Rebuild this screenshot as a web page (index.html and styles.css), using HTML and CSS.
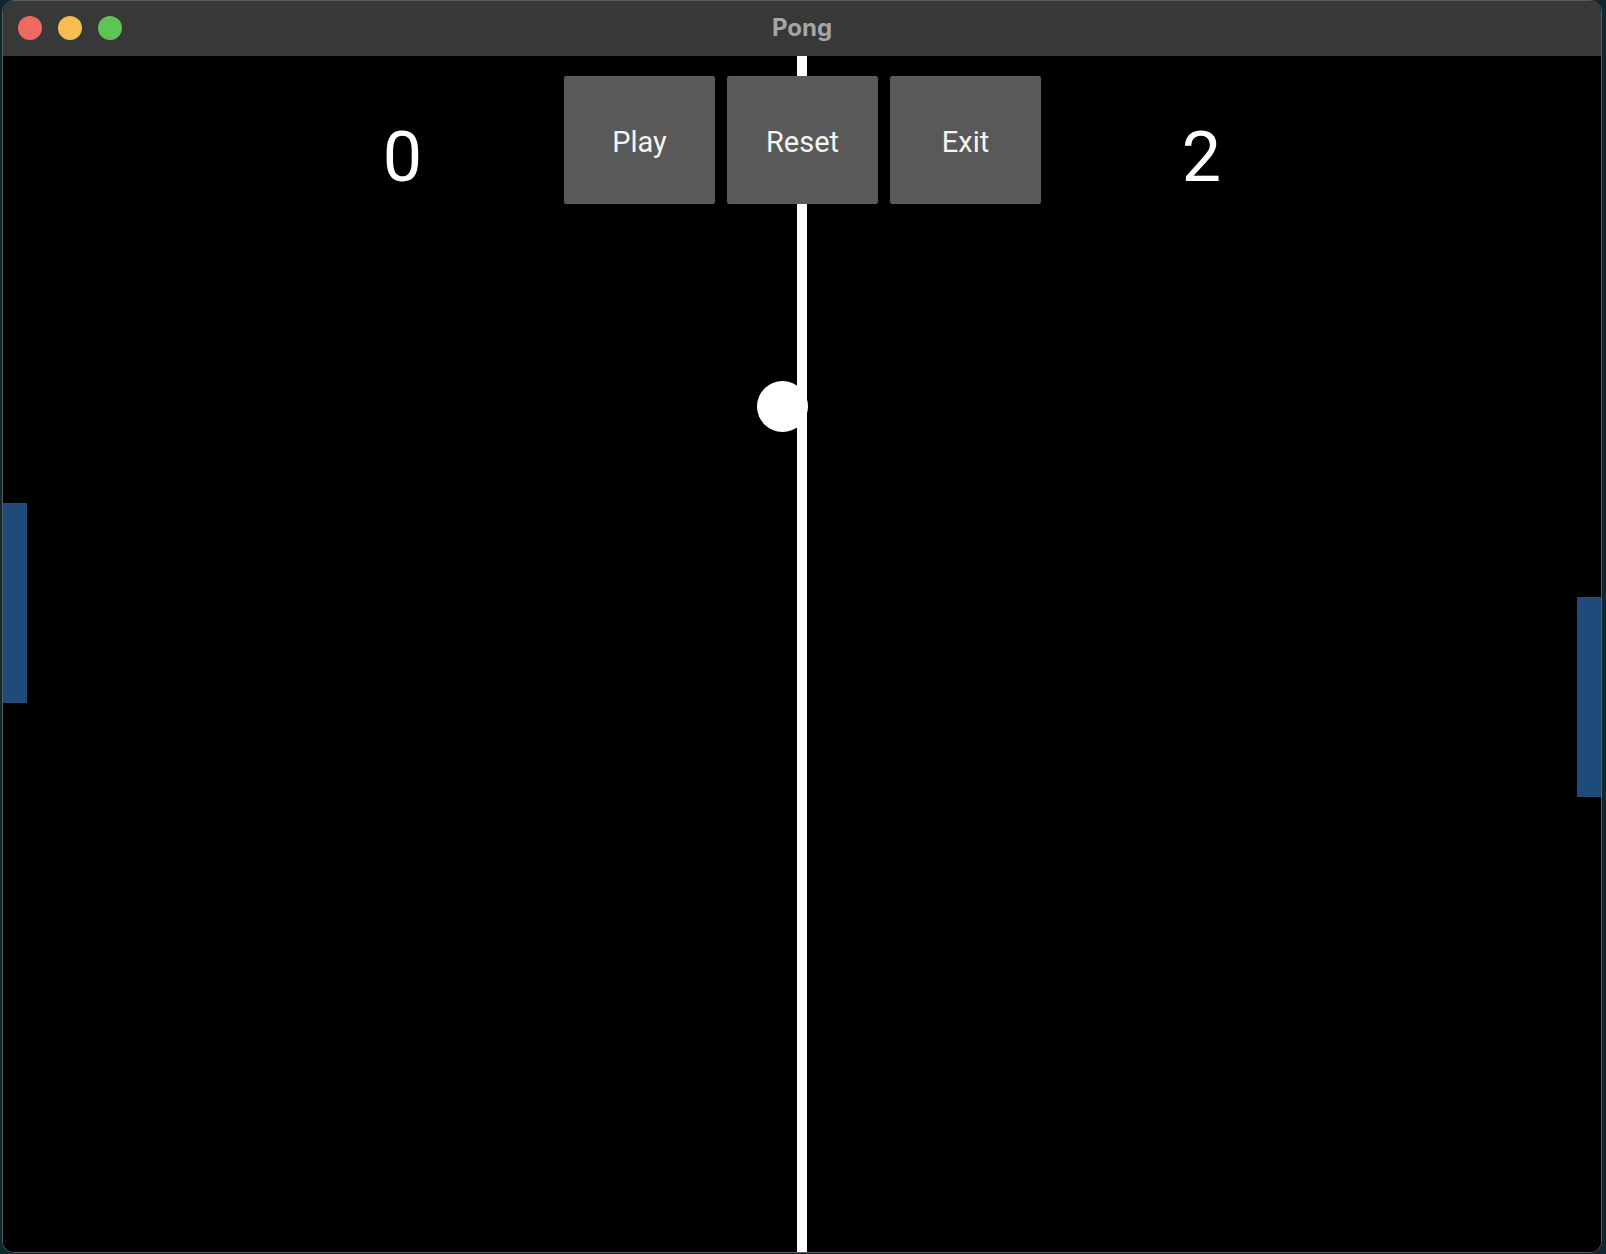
FILE: index.html
```html
<!DOCTYPE html>
<html lang="en">
<head>
<meta charset="utf-8">
<title>Pong</title>
<link rel="stylesheet" href="styles.css">
</head>
<body>
<div class="desktop">
  <div class="window">
    <div class="titlebar">
      <div class="lights">
        <span class="light red"></span>
        <span class="light yellow"></span>
        <span class="light green"></span>
      </div>
      <div class="title">Pong</div>
    </div>
    <div class="court">
      <div class="net"></div>
      <div class="scores">
        <div class="score">0</div>
        <div class="score">2</div>
      </div>
      <div class="controls">
        <button class="btn">Play</button>
        <button class="btn">Reset</button>
        <button class="btn">Exit</button>
      </div>
      <div class="ball"></div>
      <div class="paddle paddle-left"></div>
      <div class="paddle paddle-right"></div>
    </div>
  </div>
</div>
</body>
</html>
```
FILE: styles.css
```css
* { box-sizing: border-box; }
html, body {
  margin: 0;
  padding: 0;
  width: 1606px;
  height: 1254px;
  overflow: hidden;
  background: #0e2730;
  font-family: Roboto, "Liberation Sans", sans-serif;
}
.desktop {
  padding-left: 2px;
  height: 1254px;
}
.window {
  width: 1600px;
  height: 1253px;
  border: 1px solid #5c5c5c;
  border-radius: 12px;
  overflow: hidden;
  display: flex;
  flex-direction: column;
  background: #000;
}
.titlebar {
  height: 55px;
  flex: none;
  background: #383838;
  display: flex;
  align-items: center;
  position: relative;
}
.lights {
  display: flex;
  gap: 16px;
  padding-left: 15px;
  padding-bottom: 1px;
}
.light {
  width: 24px;
  height: 24px;
  border-radius: 50%;
  display: block;
}
.red { background: #ee6a5f; }
.yellow { background: #f5be4f; }
.green { background: #5ec454; }
.title {
  position: absolute;
  left: 0;
  right: 0;
  top: 0;
  bottom: 0;
  display: flex;
  align-items: center;
  justify-content: center;
  font-family: Inter, "Liberation Sans", sans-serif;
  font-weight: 700;
  font-size: 24px;
  color: #a6a6a6;
  padding-bottom: 3px;
}
.court {
  flex: 1;
  position: relative;
  background: #000;
}
.net {
  position: absolute;
  left: calc(50% - 5px);
  top: 0;
  bottom: 0;
  width: 10px;
  background: #fff;
}
.scores {
  position: relative;
  display: grid;
  grid-template-columns: 1fr 1fr;
  padding-top: 66px;
}
.score {
  text-align: center;
  color: #fff;
  font-size: 70px;
  line-height: 70px;
}
.controls {
  position: absolute;
  top: 20px;
  left: 0;
  right: 0;
  display: flex;
  justify-content: center;
  gap: 12px;
  padding-left: 1px;
}
.btn {
  width: 151px;
  height: 128px;
  border: none;
  border-radius: 2px;
  background: #595959;
  color: #f4f4f4;
  font-family: Roboto, "Liberation Sans", sans-serif;
  font-size: 29px;
  padding: 3px 0 0 0;
  margin: 0;
}
.ball {
  position: absolute;
  left: 754px;
  top: 325px;
  width: 51px;
  height: 51px;
  border-radius: 50%;
  background: #fff;
}
.paddle {
  position: absolute;
  width: 24px;
  height: 200px;
  background: #1f4b7b;
}
.paddle-left { left: 0; top: 447px; }
.paddle-right { right: 0; top: 541px; }
```
